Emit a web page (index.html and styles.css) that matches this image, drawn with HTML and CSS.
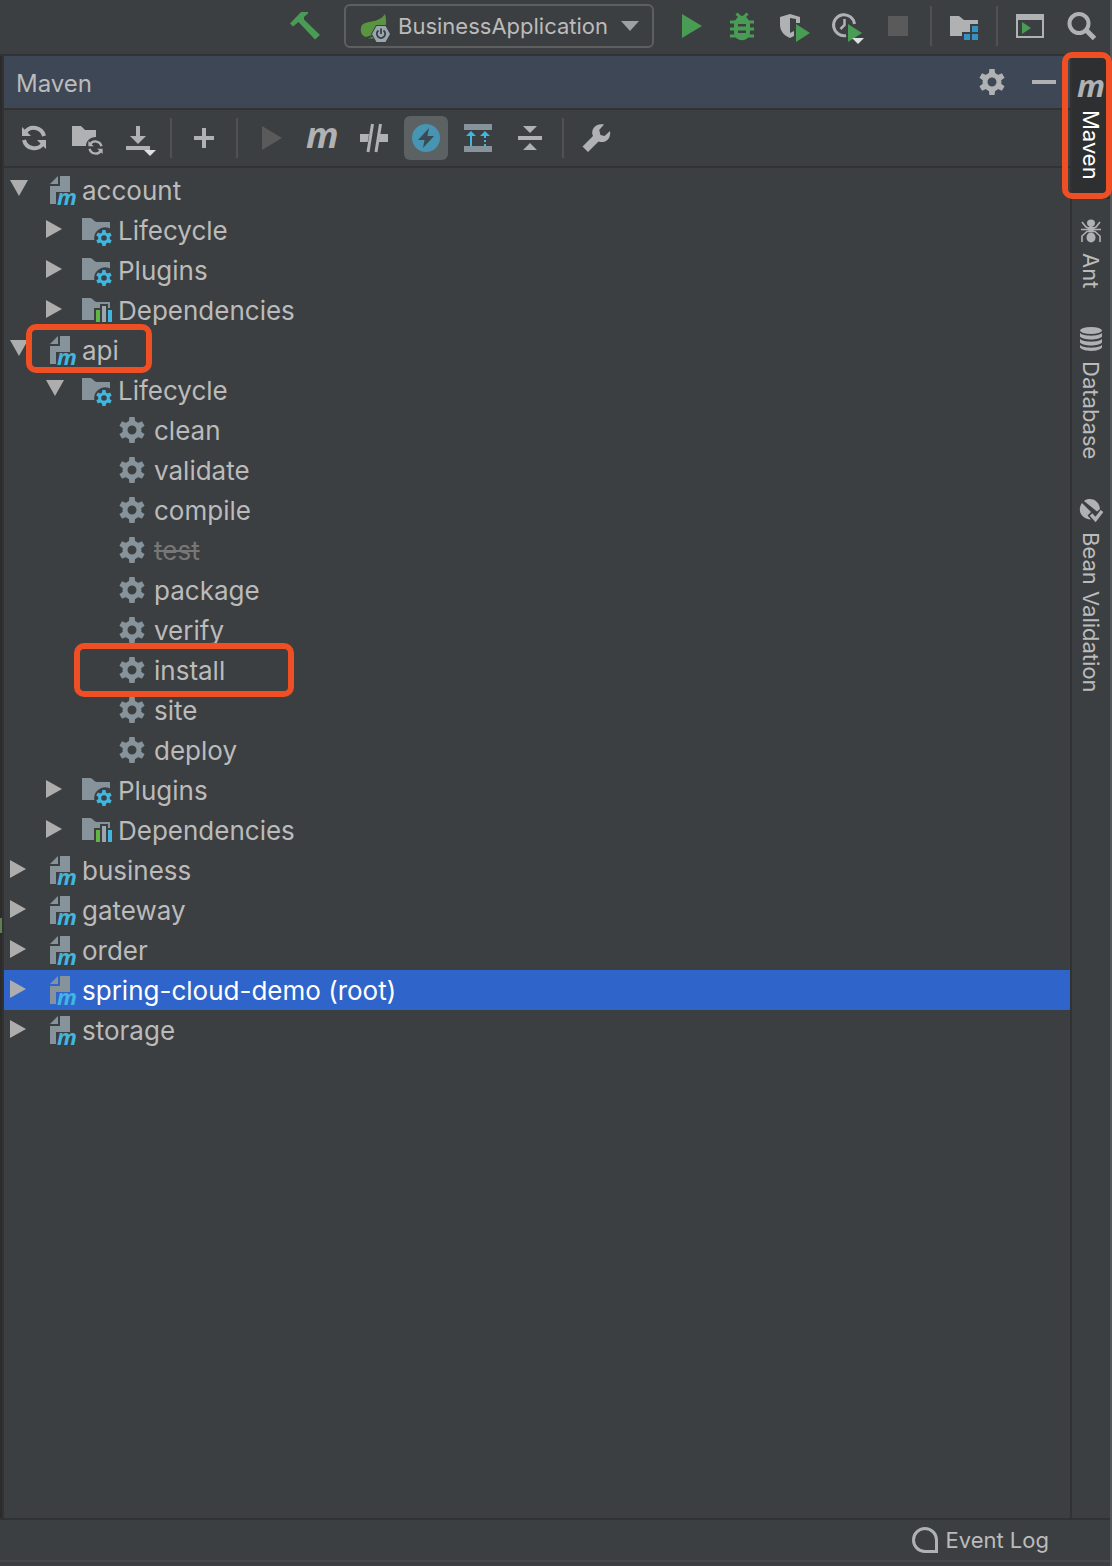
FILE: index.html
```
<!DOCTYPE html>
<html lang="en">
<head>
    <meta charset="UTF-8">
    <meta name="viewport" content="width=device-width, initial-scale=1.0">
    <title>BusinessApplication - Maven</title>
    <link rel="stylesheet" href="styles.css">
</head>
<body>
    <!-- Shared icons -->
    <svg class="sprite" aria-hidden="true">
        <symbol id="gear" viewBox="-13 -13 26 26">
            <circle r="7" fill="none" stroke="currentColor" stroke-width="5"/>
            <g fill="currentColor">
                <path id="tooth" d="M-3.2-8 -2.6-13H2.6L3.2-8z"/>
                <use href="#tooth" transform="rotate(60)"/>
                <use href="#tooth" transform="rotate(120)"/>
                <use href="#tooth" transform="rotate(180)"/>
                <use href="#tooth" transform="rotate(240)"/>
                <use href="#tooth" transform="rotate(300)"/>
            </g>
        </symbol>
        <symbol id="goal" viewBox="0 0 32 32">
            <use href="#gear" x="1" y="3" width="26" height="26"/>
        </symbol>
        <symbol id="refresh" viewBox="0 0 32 32">
            <g id="refresh-half">
                <path d="M7 10.5A10.5 10.5 0 0 1 26 14" fill="none" stroke="currentColor" stroke-width="4"/>
                <path d="M4 5v9h9z" fill="currentColor"/>
            </g>
            <use href="#refresh-half" transform="rotate(180 16 16)"/>
        </symbol>
        <symbol id="module" viewBox="0 0 32 32">
            <path d="M12 2v8H4zM14 2h10v16H10v12H4V12h10z" fill="#87939a"/>
            <text x="11" y="31" class="m-glyph" font-size="22" fill="#40b6e0">m</text>
        </symbol>
        <symbol id="folder-gear" viewBox="0 0 32 32">
            <path d="M0 4h8c3 0 4 4 7 4h13v6.500A11 11 0 0 0 12.300 26H0z" fill="#87939a"/>
            <use href="#gear" x="14" y="16" width="16" height="16" color="#40b6e0"/>
        </symbol>
        <symbol id="folder-bars" viewBox="0 0 32 32">
            <path d="M0 4h8c3 0 4 4 7 4h13v6h-2v-4h-8v4h-6v12H0z" fill="#87939a"/>
            <path d="M14 16h4v12h-4z" fill="#62b543"/>
            <path d="M20 12h4v16h-4z" fill="#9aa7b0"/>
            <path d="M26 16h4v12h-4z" fill="#40b6e0"/>
        </symbol>
        <symbol id="closed" viewBox="0 0 20 20">
            <path d="M2 0v18l16-9z" fill="currentColor"/>
        </symbol>
        <symbol id="open" viewBox="0 0 20 20">
            <path d="M2 0h18l-9 16z" fill="currentColor"/>
        </symbol>
    </svg>

    <div class="window">
        <header class="main-toolbar">
            <button class="tool build" aria-label="Build project">
                <svg class="icon" viewBox="0 0 32 32"><path d="M0 13.500 3 16.500 8.500 12 25 29.500 30 25 14 9.500V7l4-3.500V2h-7z" fill="#499c54"/></svg>
            </button>
            <label class="run-config">
                <svg class="icon" viewBox="0 0 32 32">
                    <path d="M27 4c3 11 0 19-9 20-4 1-7 2-10 3-4-1-6-5-5-9C4 9 20 15 27 4z" fill="#5b9440"/>
                    <path d="M10 28.500 16 26v2.500z" fill="#5b9440"/>
                    <path d="M18 15h10l5 9-5 9H18l-5-9z" fill="#3c3f41"/>
                    <path d="M18.500 16h9l4.500 8-4.500 8h-9L14 24z" fill="#9aa7b0"/>
                    <path d="M20.500 20.500a4.200 4.200 0 1 0 5 0M23 18.500v5.500" fill="none" stroke="#3c3f41" stroke-width="1.800"/>
                </svg>
                <select aria-label="Run configuration">
                    <option>BusinessApplication</option>
                </select>
                <svg class="caret" viewBox="0 0 18 10"><path d="M0 0h18L9 10z" fill="#9da1a4"/></svg>
            </label>
            <button class="tool" aria-label="Run">
                <svg class="icon" viewBox="0 0 32 32"><path d="M8 4v24l20-12z" fill="#499c54"/></svg>
            </button>
            <button class="tool" aria-label="Debug">
                <svg class="icon" viewBox="0 0 32 32">
                    <path d="M10.500 3.500 16 9l5.500-5.500M4 12h24M4 19h24M4 26h24" fill="none" stroke="#499c54" stroke-width="3"/>
                    <path d="M11 8c2-3 8-3 10 0l3 4v10c0 11-16 11-16 0V12z" fill="#499c54"/>
                    <path d="M12 14h8v2.500h-8zM12 20.500h8V23h-8z" fill="#3c3f41"/>
                </svg>
            </button>
            <button class="tool" aria-label="Run with coverage">
                <svg class="icon" viewBox="0 0 32 32">
                    <path d="M12 4 22 7v6h-4V9l-6-1v15l4-2v5l-4 2C5 25 2 20 2 15V7z" fill="#afb1b3"/>
                    <path d="M18 14v18l14-9z" fill="#499c54"/>
                </svg>
            </button>
            <button class="tool" aria-label="Profile">
                <svg class="icon" viewBox="0 0 32 32">
                    <path d="M24.500 14A10.500 10.500 0 1 0 16 25.500" fill="none" stroke="#afb1b3" stroke-width="3"/>
                    <path d="M14.500 9v6l-4 4" fill="none" stroke="#afb1b3" stroke-width="2.500"/>
                    <path d="M18 14v18l14-9z" fill="#499c54"/>
                    <path d="M22 28h12l-6 6z" fill="#dfe1e3"/>
                </svg>
            </button>
            <button class="tool" aria-label="Stop" disabled>
                <svg class="icon" viewBox="0 0 32 32"><path d="M6 6h20v20H6z" fill="#5a5a5a"/></svg>
            </button>
            <span class="separator"></span>
            <button class="tool" aria-label="Project structure">
                <svg class="icon" viewBox="0 0 32 32">
                    <path d="M2 6h9l5 4h14v4h-8v8h-8v4H2z" fill="#afb1b3"/>
                    <path d="M24 16h6v6h-6zM16 24h6v6h-6zM24 24h6v6h-6z" fill="#3592c4"/>
                </svg>
            </button>
            <span class="separator"></span>
            <button class="tool" aria-label="Run anything">
                <svg class="icon" viewBox="0 0 32 32">
                    <path d="M2 4h28v24H2zM4 10v16h24V10z" fill="#afb1b3" fill-rule="evenodd"/>
                    <path d="M8 12v12l9-6z" fill="#499c54"/>
                </svg>
            </button>
            <button class="tool" aria-label="Search everywhere">
                <svg class="icon" viewBox="0 0 32 32" fill="none" stroke="#afb1b3">
                    <circle cx="13" cy="13.500" r="9.500" stroke-width="4"/>
                    <path d="m20 20 8.500 8.500" stroke-width="5"/>
                </svg>
            </button>
        </header>

        <div class="workspace">
            <div class="editor-edge"><span class="edge-mark"></span></div>

            <main class="tool-window">
                <div class="window-header">
                    <h1 class="window-title">Maven</h1>
                    <button class="tool" aria-label="Settings"><svg class="gear-icon"><use href="#gear"/></svg></button>
                    <button class="tool" aria-label="Hide">
                        <svg class="icon" viewBox="0 0 32 32"><path d="M4 14h24v4H4z" fill="currentColor"/></svg>
                    </button>
                </div>

                <div class="maven-toolbar">
                    <button class="tool" aria-label="Reload all projects"><svg class="icon"><use href="#refresh"/></svg></button>
                    <button class="tool" aria-label="Generate sources">
                        <svg class="icon" viewBox="0 0 32 32">
                            <path d="M2 4h9l4 4h11v7c-6 0-10 4-10 9H2z" fill="currentColor"/>
                            <use href="#refresh" x="16" y="16" width="19" height="19"/>
                        </svg>
                    </button>
                    <button class="tool" aria-label="Download sources">
                        <svg class="icon" viewBox="0 0 32 32">
                            <path d="M14 4h4v10h6l-8 8-8-8h6zM4 24h24v4H4z" fill="currentColor"/>
                            <path d="M22 28h12l-6 6z" fill="#dfe1e3"/>
                        </svg>
                    </button>
                    <span class="separator"></span>
                    <button class="tool" aria-label="Add Maven project">
                        <svg class="icon" viewBox="0 0 32 32"><path d="M14 6h4v8h8v4h-8v8h-4v-8H6v-4h8z" fill="currentColor"/></svg>
                    </button>
                    <span class="separator"></span>
                    <button class="tool" aria-label="Run Maven build" disabled>
                        <svg class="icon" viewBox="0 0 32 32"><path d="M8 4v24l20-12z" fill="#5a5a5a"/></svg>
                    </button>
                    <button class="tool" aria-label="Execute Maven goal">
                        <svg class="icon" viewBox="0 0 32 32"><text x="0" y="26" class="m-glyph" font-size="36" fill="currentColor">m</text></svg>
                    </button>
                    <button class="tool" aria-label="Toggle skip tests">
                        <svg class="icon" viewBox="0 0 32 32">
                            <path d="M2 12h9l-1.300 8H2zM22 12h8v8h-9.300z" fill="currentColor"/>
                            <path d="M14.500 2 10 30M22.500 2 18 30" fill="none" stroke="currentColor" stroke-width="3"/>
                        </svg>
                    </button>
                    <button class="tool pressed" aria-label="Toggle offline mode" aria-pressed="true">
                        <svg class="icon" viewBox="0 0 32 32">
                            <circle cx="16" cy="16" r="14" fill="#4794b3"/>
                            <path d="M19 6 8 18h6.500L13 26l11-12h-6.500z" fill="#3c4b52"/>
                        </svg>
                    </button>
                    <button class="tool" aria-label="Show dependencies">
                        <svg class="icon" viewBox="0 0 32 32">
                            <path d="M2 2h28v6H2zM2 24h28v6H2z" fill="#87939a"/>
                            <path d="M9 9l5 5h-4v10H8V14H4zM23 9l5 5H18zM22 14h2v2h-2zM22 18h2v2h-2zM22 22h2v2h-2z" fill="#40b6e0"/>
                        </svg>
                    </button>
                    <button class="tool" aria-label="Collapse all">
                        <svg class="icon" viewBox="0 0 32 32"><path d="M9 4h14l-7 7zM4 14h24v4H4zM16 21l7 7H9z" fill="currentColor"/></svg>
                    </button>
                    <span class="separator"></span>
                    <button class="tool" aria-label="Maven settings">
                        <svg class="icon" viewBox="0 0 32 32">
                            <path d="M24 2.500c-8-2-14 5-11 11.500L2.500 24.500 8 30l10.500-10.500c7 2.500 13-3 11.500-10.500l-5.500 5-4-1-1.300-5z" fill="currentColor"/>
                        </svg>
                    </button>
                </div>

                <ul class="tree">
                    <li>
                        <div class="row"><button class="toggle" aria-label="Collapse account"><svg><use href="#open"/></svg></button><svg class="icon"><use href="#module"/></svg><span>account</span></div>
                        <ul>
                            <li class="row"><button class="toggle" aria-label="Expand Lifecycle"><svg><use href="#closed"/></svg></button><svg class="icon"><use href="#folder-gear"/></svg><span>Lifecycle</span></li>
                            <li class="row"><button class="toggle" aria-label="Expand Plugins"><svg><use href="#closed"/></svg></button><svg class="icon"><use href="#folder-gear"/></svg><span>Plugins</span></li>
                            <li class="row"><button class="toggle" aria-label="Expand Dependencies"><svg><use href="#closed"/></svg></button><svg class="icon"><use href="#folder-bars"/></svg><span>Dependencies</span></li>
                        </ul>
                    </li>
                    <li>
                        <div class="row"><button class="toggle" aria-label="Collapse api"><svg><use href="#open"/></svg></button><svg class="icon"><use href="#module"/></svg><span>api</span><i class="marker marker-api"></i></div>
                        <ul>
                            <li>
                                <div class="row"><button class="toggle" aria-label="Collapse Lifecycle"><svg><use href="#open"/></svg></button><svg class="icon"><use href="#folder-gear"/></svg><span>Lifecycle</span></div>
                                <ul class="goals">
                                    <li class="row"><svg class="icon"><use href="#goal"/></svg><span>clean</span></li>
                                    <li class="row"><svg class="icon"><use href="#goal"/></svg><span>validate</span></li>
                                    <li class="row"><svg class="icon"><use href="#goal"/></svg><span>compile</span></li>
                                    <li class="row"><svg class="icon"><use href="#goal"/></svg><s class="skipped">test</s></li>
                                    <li class="row"><svg class="icon"><use href="#goal"/></svg><span>package</span></li>
                                    <li class="row"><svg class="icon"><use href="#goal"/></svg><span>verify</span></li>
                                    <li class="row"><svg class="icon"><use href="#goal"/></svg><span>install</span><i class="marker marker-install"></i></li>
                                    <li class="row"><svg class="icon"><use href="#goal"/></svg><span>site</span></li>
                                    <li class="row"><svg class="icon"><use href="#goal"/></svg><span>deploy</span></li>
                                </ul>
                            </li>
                            <li class="row"><button class="toggle" aria-label="Expand Plugins"><svg><use href="#closed"/></svg></button><svg class="icon"><use href="#folder-gear"/></svg><span>Plugins</span></li>
                            <li class="row"><button class="toggle" aria-label="Expand Dependencies"><svg><use href="#closed"/></svg></button><svg class="icon"><use href="#folder-bars"/></svg><span>Dependencies</span></li>
                        </ul>
                    </li>
                    <li class="row"><button class="toggle" aria-label="Expand business"><svg><use href="#closed"/></svg></button><svg class="icon"><use href="#module"/></svg><span>business</span></li>
                    <li class="row"><button class="toggle" aria-label="Expand gateway"><svg><use href="#closed"/></svg></button><svg class="icon"><use href="#module"/></svg><span>gateway</span></li>
                    <li class="row"><button class="toggle" aria-label="Expand order"><svg><use href="#closed"/></svg></button><svg class="icon"><use href="#module"/></svg><span>order</span></li>
                    <li class="row selected"><button class="toggle" aria-label="Expand spring-cloud-demo"><svg><use href="#closed"/></svg></button><svg class="icon"><use href="#module"/></svg><span>spring-cloud-demo (root)</span></li>
                    <li class="row"><button class="toggle" aria-label="Expand storage"><svg><use href="#closed"/></svg></button><svg class="icon"><use href="#module"/></svg><span>storage</span></li>
                </ul>
            </main>

            <nav class="stripe">
                <button class="stripe-tab active">
                    <svg viewBox="0 0 24 24"><text x="-2" y="21" class="m-glyph" font-size="31" fill="currentColor">m</text></svg>
                    <span>Maven</span>
                    <i class="marker marker-tab"></i>
                </button>
                <button class="stripe-tab">
                    <svg viewBox="0 0 24 24">
                        <ellipse cx="12" cy="4" rx="4" ry="3.500" fill="currentColor"/>
                        <ellipse cx="12" cy="10" rx="3" ry="3" fill="currentColor"/>
                        <ellipse cx="12" cy="18.500" rx="4.500" ry="5" fill="currentColor"/>
                        <path d="M3 3l4 5 5 2 5-2 4-5M2 10.500h20M3 23v-6l5-4.500h8l5 4.500v6" fill="none" stroke="currentColor" stroke-width="1.600"/>
                    </svg>
                    <span>Ant</span>
                </button>
                <button class="stripe-tab">
                    <svg viewBox="0 0 24 24">
                        <ellipse cx="12" cy="3.500" rx="11" ry="3.500" fill="currentColor"/>
                        <path d="M1 6c3 3.500 19 3.500 22 0v3.500c-3 4-19 4-22 0zM1 12c3 3.500 19 3.500 22 0v3.500c-3 4-19 4-22 0zM1 18c3 3.500 19 3.500 22 0v2.500c-3 4.500-19 4.500-22 0z" fill="currentColor"/>
                    </svg>
                    <span>Database</span>
                </button>
                <button class="stripe-tab">
                    <svg viewBox="0 0 24 24">
                        <path d="M5 3C10-1 20 1 21 11l-3 2.500zM3 5l9 9-3.500 3.500 3.500 4C2 21-2 12 3 5z" fill="currentColor"/>
                        <path d="m12 16.500 4.500 5L23 13" fill="none" stroke="currentColor" stroke-width="3.500"/>
                    </svg>
                    <span>Bean Validation</span>
                </button>
            </nav>
        </div>

        <footer class="status-bar">
            <button class="event-log">
                <svg viewBox="0 0 26 26"><path d="M24.500 24.500V13A11.500 11.500 0 1 0 13 24.500z" fill="none" stroke="#afb1b3" stroke-width="3"/></svg>
                <span>Event Log</span>
            </button>
        </footer>
    </div>
</body>
</html>
```
FILE: styles.css
```
* {
    margin: 0;
    padding: 0;
    box-sizing: border-box;
}

body {
    font-family: Inter, 'Liberation Sans', sans-serif;
    background: #3c3f41;
    color: #bbbbbb;
}

button,
select {
    font: inherit;
    color: inherit;
    background: none;
    border: none;
    cursor: pointer;
}

ul {
    list-style: none;
}

svg {
    display: block;
    flex: none;
    overflow: visible;
}

.sprite {
    position: absolute;
    width: 0;
    height: 0;
}

.icon {
    width: 32px;
    height: 32px;
}

.m-glyph {
    font-family: 'Open Sans', sans-serif;
    font-weight: bold;
    font-style: italic;
}

.window {
    display: flex;
    flex-direction: column;
    min-height: 100vh;
    border-right: 2px solid #555759;
}

/* Main toolbar */
.main-toolbar {
    display: flex;
    align-items: center;
    justify-content: flex-end;
    height: 56px;
    padding: 0 2px 2px 0;
    border-bottom: 2px solid #323232;
}

.tool {
    display: flex;
    align-items: center;
    justify-content: center;
    width: 44px;
    height: 44px;
    margin: 0 4px;
    border-radius: 6px;
    color: #afb1b3;
}

.tool.pressed {
    background: #5c6164;
}

.build {
    margin-right: 16px;
}

.separator {
    width: 2px;
    height: 40px;
    margin: 0 6px;
    background: #515151;
}

.run-config {
    display: flex;
    align-items: center;
    height: 44px;
    padding: 0 13px 0 12px;
    margin-right: 10px;
    border: 2px solid #5e6060;
    border-radius: 6px;
}

.run-config select {
    appearance: none;
    font-size: 22px;
    margin: 0 12px 0 8px;
    outline: none;
}

.caret {
    width: 18px;
    height: 10px;
}

/* Workspace */
.workspace {
    display: flex;
    flex: 1;
}

.editor-edge {
    position: relative;
    width: 4px;
    background: #2b2b2b;
    border-right: 2px solid #323232;
}

.edge-mark {
    position: absolute;
    top: 862px;
    left: 0;
    width: 2px;
    height: 15px;
    background: #5f7f4f;
}

.tool-window {
    flex: 1;
    min-width: 0;
}

.window-header {
    display: flex;
    align-items: center;
    height: 54px;
    padding-left: 12px;
    background: #3d4755;
    border-bottom: 2px solid #323232;
}

.window-title {
    flex: 1;
    padding-top: 2px;
    font-size: 24px;
    font-weight: normal;
}

.gear-icon {
    width: 26px;
    height: 26px;
}

.maven-toolbar {
    display: flex;
    align-items: center;
    height: 58px;
    padding-left: 4px;
    border-bottom: 2px solid #323232;
}

/* Project tree */
.tree {
    padding-top: 2px;
    font-size: 26px;
}

.row {
    position: relative;
    display: flex;
    align-items: center;
    gap: 4px;
    height: 40px;
    padding-left: 4px;
    white-space: nowrap;
}

.tree ul .row {
    padding-left: 40px;
}

.tree .goals .row {
    padding-left: 114px;
}

.row.selected {
    background: #2f65ca;
    color: #ffffff;
}

.row > .icon {
    color: #87939a;
}

.toggle {
    width: 34px;
    height: 20px;
    color: #adadad;
}

.toggle svg {
    width: 20px;
    height: 20px;
}

.skipped {
    color: #777777;
}

/* Orange callout frames */
.marker {
    position: absolute;
    border: 6px solid #f04e23;
    border-radius: 10px;
    pointer-events: none;
}

.marker-api {
    top: -6px;
    left: 22px;
    width: 126px;
    height: 49px;
}

.marker-install {
    top: -7px;
    left: 70px;
    width: 220px;
    height: 54px;
}

.marker-tab {
    top: -4px;
    right: -2px;
    bottom: 0;
    left: -10px;
}

/* Right tool stripe */
.stripe {
    width: 40px;
    border-left: 2px solid #323232;
}

.stripe-tab {
    position: relative;
    display: flex;
    flex-direction: column;
    align-items: center;
    gap: 10px;
    width: 100%;
    padding: 20px 0 19px;
    font-size: 22px;
}

.stripe-tab svg {
    width: 24px;
    height: 24px;
    color: #afb1b3;
}

.stripe-tab span {
    writing-mode: vertical-rl;
}

.stripe-tab.active {
    background: #2d2f30;
    color: #ffffff;
}

/* Status bar */
.status-bar {
    display: flex;
    justify-content: flex-end;
    height: 48px;
    padding: 0 61px 6px 0;
    border-top: 2px solid #323232;
    box-shadow: inset 0 -4px #3c3f41, inset 0 -6px #484848;
}

.event-log {
    display: flex;
    align-items: center;
    gap: 8px;
    font-size: 22px;
}

.event-log svg {
    width: 26px;
    height: 26px;
}
```
